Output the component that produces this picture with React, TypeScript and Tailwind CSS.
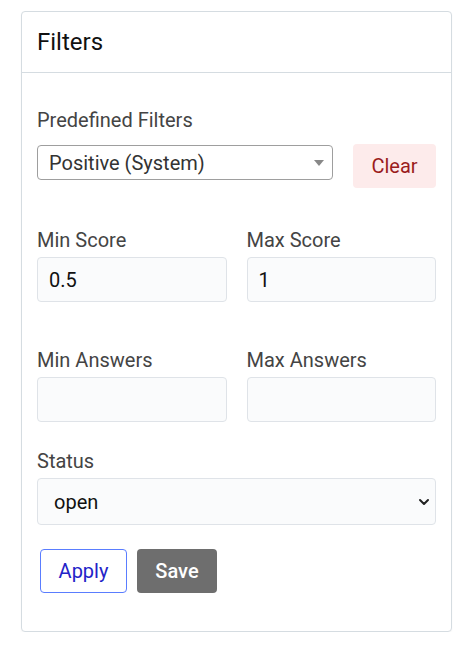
import { ChevronDown } from "lucide-react";

function Field({ label, value }: { label: string; value?: string }) {
  return (
    <div className="flex flex-col">
      <label className="text-[20px] leading-6 text-[#444]">{label}</label>
      <div className="mt-[5px] h-[45px] rounded border border-[#dfe3e8] bg-[#fafbfc] px-[11px] flex items-center text-[20px] text-[#111]">
        {value}
      </div>
    </div>
  );
}

export default function App() {
  return (
    <div className="pt-[11px] pl-[21px] font-['Roboto',sans-serif]">
      <div className="w-[431px] rounded border border-[#d5dce1] bg-white shadow-[0_1px_2px_rgba(0,0,0,0.04)]">
        <div className="h-[61px] border-b border-[#d5dce1] flex items-center px-[15px]">
          <h2 className="text-[24px] text-[#111]">Filters</h2>
        </div>
        <div className="px-[15px] pt-[35px] pb-[38px]">
          <label className="block text-[20px] leading-6 text-[#444]">Predefined Filters</label>
          <div className="mt-[12px] flex items-start gap-5">
            <div className="mt-[1px] h-[35px] w-[296px] rounded border border-[#9e9e9e] flex items-center justify-between pl-[11px] pr-[8px] text-[20px] text-[#333]">
              <span>Positive (System)</span>
              <svg width="10" height="6" viewBox="0 0 10 6">
                <path d="M0 0 L10 0 L5 6 Z" fill="#888" />
              </svg>
            </div>
            <button className="h-[44px] w-[83px] rounded bg-[#fdebeb] text-[20px] text-[#9b1c1c]">Clear</button>
          </div>

          <div className="mt-[40px] grid grid-cols-2 gap-x-5">
            <Field label="Min Score" value="0.5" />
            <Field label="Max Score" value="1" />
          </div>

          <div className="mt-[46px] grid grid-cols-2 gap-x-5">
            <Field label="Min Answers" />
            <Field label="Max Answers" />
          </div>

          <div className="mt-[27px]">
            <label className="block text-[20px] leading-6 text-[#444]">Status</label>
            <div className="mt-[5px] h-[47px] rounded border border-[#dfe3e8] bg-[#fafbfc] flex items-center justify-between pl-[16px] pr-[3px] text-[20px] text-[#111]">
              <span>open</span>
              <ChevronDown size={16} strokeWidth={3} className="text-[#222]" />
            </div>
          </div>

          <div className="mt-[24px] ml-[3px] flex gap-[10px]">
            <button className="h-[44px] w-[87px] rounded border border-[#5a7dff] bg-white text-[20px] text-[#2323c8]">Apply</button>
            <button className="h-[44px] w-[80px] rounded bg-[#6e6e6e] text-[20px] font-medium text-white">Save</button>
          </div>
        </div>
      </div>
    </div>
  );
}
